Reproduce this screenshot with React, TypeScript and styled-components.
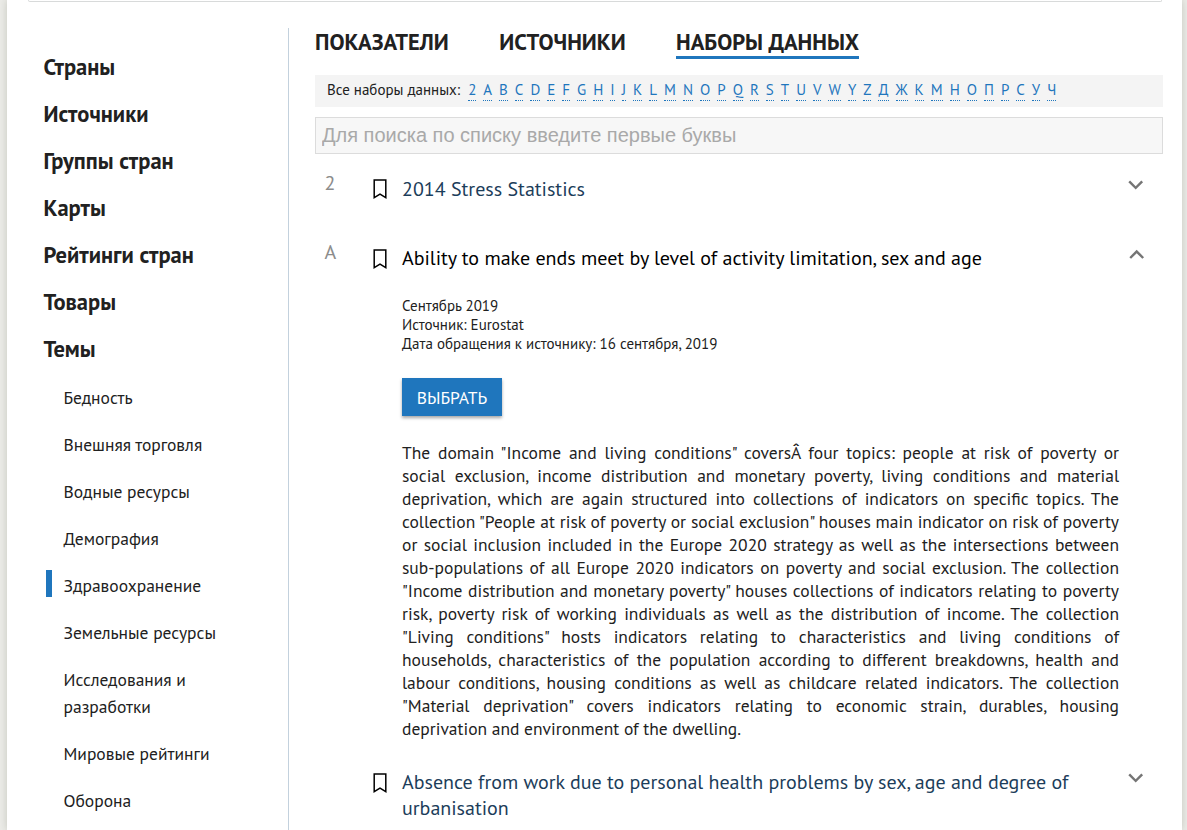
import React from "react";
import styled, { createGlobalStyle } from "styled-components";

const GlobalStyle = createGlobalStyle`
  * { box-sizing: border-box; }
  html { height: 100%; overflow: hidden; }
  body {
    margin: 0;
    height: 100%;
    overflow: hidden;
    background: #ecece8;
    color: #212121;
    font-family: "PT Sans", "Noto Sans", sans-serif;
    font-size: 17.5px;
  }
`;

const Sheet = styled.div`
  width: 1175px;
  height: 830px;
  margin-left: 7px;
  background: #fff;
  box-shadow: 0 0 8px rgba(120, 125, 110, 0.35);
`;

const TopPanel = styled.div`
  height: 2px;
  margin: 0 20px 0 21px;
  border: 1px solid #d8dada;
  border-top: 0;
  border-radius: 0 0 4px 4px;
`;

const Columns = styled.div`
  display: flex;
  height: 802px;
  margin-top: 26px;
  overflow: hidden;
`;

const Sidebar = styled.nav`
  flex: none;
  width: 282px;
  padding: 25px 40px 0 36.5px;
  border-right: 1px solid #c3d1dd;
`;

const MenuLink = styled.a`
  display: block;
  margin-bottom: 20px;
  color: #212121;
  font-size: 22.5px;
  font-weight: 700;
  line-height: 27px;
`;

const SubMenu = styled.div`
  margin-left: 2.5px;
  padding-top: 2px;
`;

const SubLink = styled.a<{ $active?: boolean }>`
  display: block;
  position: relative;
  margin-bottom: 20px;
  padding-left: 17.5px;
  line-height: 27px;
  &::before {
    content: "";
    position: absolute;
    left: 0;
    top: -2px;
    width: 6px;
    height: 27px;
    background: ${(p) => (p.$active ? "#1f76bd" : "transparent")};
  }
`;

const Content = styled.main`
  width: 848px;
  margin-left: 26px;
`;

const Tabs = styled.div`
  display: flex;
  gap: 50.3px;
  height: 47px;
`;

const Tab = styled.a<{ $active?: boolean }>`
  height: 31px;
  border-bottom: 3px solid ${(p) => (p.$active ? "#1f76bd" : "transparent")};
  font-size: 22.5px;
  font-weight: 700;
  line-height: 28px;
  white-space: nowrap;
`;

const Alphabet = styled.div`
  display: flex;
  gap: 7px;
  height: 32px;
  padding: 5px 12px 0;
  background: #f4f4f4;
  font-size: 15px;
  line-height: 20px;
`;

const AlphabetLabel = styled.span`
  margin-right: 1px;
`;

const Letter = styled.a`
  height: 21px;
  border-bottom: 1px dotted #1f76bd;
  color: #1f76bd;
`;

const Search = styled.input`
  display: block;
  width: 100%;
  height: 37px;
  margin: 10px 0 19px;
  padding: 0 6px;
  border: 1px solid #dcdcdc;
  border-radius: 0;
  background: #f7f7f7;
  font: 20px "Liberation Sans", Arial, sans-serif;
  &::placeholder { color: #a9a9a9; opacity: 1; }
`;

const Entry = styled.section<{ $open?: boolean }>`
  display: grid;
  grid-template-columns: 58px 29px 717px 1fr;
  align-items: start;
  margin-bottom: ${(p) => (p.$open ? 26 : 40.4)}px;
`;

const GroupLetter = styled.span`
  padding-left: 9.5px;
  color: #8c8c8c;
  font-size: 20px;
  line-height: 20px;
`;

const BookmarkIcon = styled.svg`
  display: block;
  width: 14px;
  height: 20px;
  margin-top: 6.2px;
`;

const Title = styled.h2<{ $open?: boolean }>`
  margin: 3px 0 0;
  color: ${(p) => (p.$open ? "#000" : "#1c3d5a")};
  font-size: 20px;
  font-weight: 400;
  line-height: 26px;
`;

const Chevron = styled.svg<{ $up?: boolean }>`
  display: block;
  width: 29.4px;
  height: 29.4px;
  margin-left: ${(p) => (p.$up ? 2.6 : 2)}px;
  margin-top: ${(p) => (p.$up ? -2 : -3)}px;
  fill: #757575;
  transform: ${(p) => (p.$up ? "rotate(180deg)" : "none")};
`;

const Meta = styled.div`
  margin-top: 25px;
  font-size: 15px;
  line-height: 19px;
`;

const SelectButton = styled.button`
  display: block;
  width: 100px;
  height: 38px;
  margin: 25px 0;
  padding: 0;
  border: 0;
  background: #1f76bd;
  box-shadow: 0 2px 3px rgba(0, 0, 0, 0.35);
  color: #fff;
  font: inherit;
`;

const Description = styled.p`
  margin: 0;
  line-height: 23px;
  text-align: justify;
`;

const menu = ["Страны", "Источники", "Группы стран", "Карты", "Рейтинги стран", "Товары", "Темы"];
const topics = [
  "Бедность", "Внешняя торговля", "Водные ресурсы", "Демография", "Здравоохранение",
  "Земельные ресурсы", "Исследования и разработки", "Мировые рейтинги", "Оборона",
];
const letters = "2ABCDEFGHIJKLMNOPQRSTUVWYZДЖКМНОПРСУЧ".split("");

const Bookmark = () => (
  <BookmarkIcon viewBox="0 0 14 20">
    <path d="M1.2 1h11.6v17.6L7 15.2l-5.8 3.4z" fill="none" stroke="#000" strokeWidth="1.5" />
  </BookmarkIcon>
);

interface DatasetProps {
  letter?: string;
  title: string;
  open?: boolean;
  children?: React.ReactNode;
}

const Dataset = ({ letter, title, open, children }: DatasetProps) => (
  <Entry $open={open}>
    <GroupLetter>{letter}</GroupLetter>
    <Bookmark />
    <div>
      <Title $open={open}>{title}</Title>
      {children}
    </div>
    <Chevron viewBox="0 0 24 24" $up={open}>
      <path d="M16.59 8.59L12 13.17 7.41 8.59 6 10l6 6 6-6z" />
    </Chevron>
  </Entry>
);

export default function App() {
  return (
    <>
      <GlobalStyle />
      <Sheet>
        <TopPanel />
        <Columns>
          <Sidebar>
            {menu.map((m) => <MenuLink key={m}>{m}</MenuLink>)}
            <SubMenu>
              {topics.map((t) => (
                <SubLink key={t} $active={t === "Здравоохранение"}>{t}</SubLink>
              ))}
            </SubMenu>
          </Sidebar>
          <Content>
            <Tabs>
              <Tab>ПОКАЗАТЕЛИ</Tab>
              <Tab>ИСТОЧНИКИ</Tab>
              <Tab $active>НАБОРЫ ДАННЫХ</Tab>
            </Tabs>
            <Alphabet>
              <AlphabetLabel>Все наборы данных:</AlphabetLabel>
              {letters.map((l) => <Letter key={l}>{l}</Letter>)}
            </Alphabet>
            <Search placeholder="Для поиска по списку введите первые буквы" />
            <Dataset letter="2" title="2014 Stress Statistics" />
            <Dataset
              letter="A"
              title="Ability to make ends meet by level of activity limitation, sex and age"
              open
            >
              <Meta>
                <div>Сентябрь 2019</div>
                <div>Источник: Eurostat</div>
                <div>Дата обращения к источнику: 16 сентября, 2019</div>
              </Meta>
              <SelectButton>ВЫБРАТЬ</SelectButton>
              <Description>
                The domain "Income and living conditions" coversÂ four topics: people at risk of
                poverty or social exclusion, income distribution and monetary poverty, living
                conditions and material deprivation, which are again structured into collections of
                indicators on specific topics. The collection "People at risk of poverty or social
                exclusion" houses main indicator on risk of poverty or social inclusion included in
                the Europe 2020 strategy as well as the intersections between sub-populations of all
                Europe 2020 indicators on poverty and social exclusion. The collection "Income
                distribution and monetary poverty" houses collections of indicators relating to
                poverty risk, poverty risk of working individuals as well as the distribution of
                income. The collection "Living conditions" hosts indicators relating to
                characteristics and living conditions of households, characteristics of the
                population according to different breakdowns, health and labour conditions, housing
                conditions as well as childcare related indicators. The collection "Material
                deprivation" covers indicators relating to economic strain, durables, housing
                deprivation and environment of the dwelling.
              </Description>
            </Dataset>
            <Dataset title="Absence from work due to personal health problems by sex, age and degree of urbanisation" />
          </Content>
        </Columns>
      </Sheet>
    </>
  );
}
